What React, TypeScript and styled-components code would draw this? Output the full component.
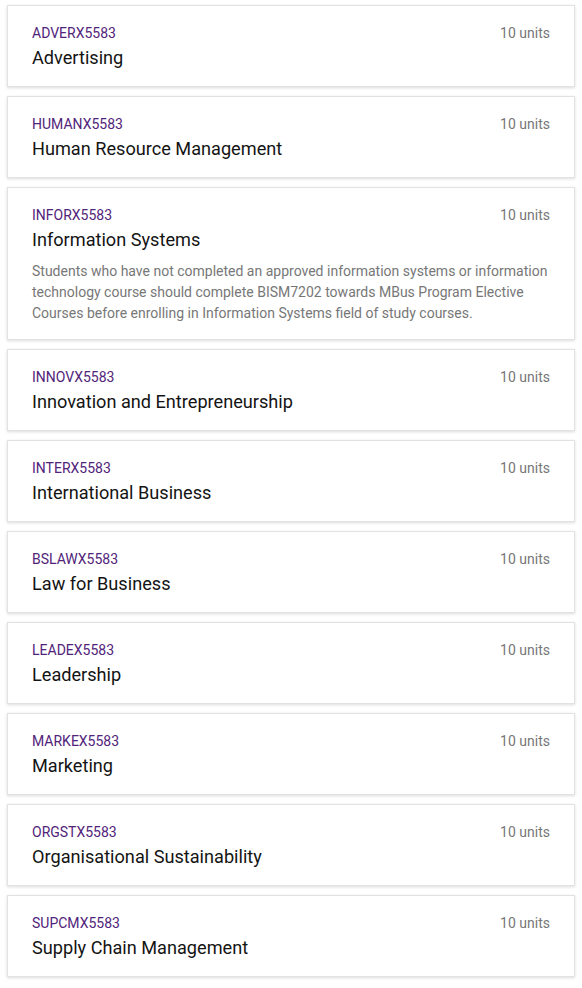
import styled, { createGlobalStyle } from "styled-components";

type Course = {
  code: string;
  title: string;
  units: number;
  note?: string;
};

const courses: Course[] = [
  { code: "ADVERX5583", title: "Advertising", units: 10 },
  { code: "HUMANX5583", title: "Human Resource Management", units: 10 },
  {
    code: "INFORX5583",
    title: "Information Systems",
    units: 10,
    note:
      "Students who have not completed an approved information systems or information technology course should complete BISM7202 towards MBus Program Elective Courses before enrolling in Information Systems field of study courses.",
  },
  { code: "INNOVX5583", title: "Innovation and Entrepreneurship", units: 10 },
  { code: "INTERX5583", title: "International Business", units: 10 },
  { code: "BSLAWX5583", title: "Law for Business", units: 10 },
  { code: "LEADEX5583", title: "Leadership", units: 10 },
  { code: "MARKEX5583", title: "Marketing", units: 10 },
  { code: "ORGSTX5583", title: "Organisational Sustainability", units: 10 },
  { code: "SUPCMX5583", title: "Supply Chain Management", units: 10 },
];

const App = () => {
  return (
    <>
      <GlobalStyle />
      <List>
        {courses.map((c) => (
          <Card key={c.code}>
            <TopRow>
              <Code>{c.code}</Code>
              <Units>{c.units} units</Units>
            </TopRow>
            <Title>{c.title}</Title>
            {c.note && <Note>{c.note}</Note>}
          </Card>
        ))}
      </List>
    </>
  );
};

export default App;

const GlobalStyle = createGlobalStyle`
  body {
    margin: 0;
    background: #fff;
    font-family: Roboto, "Liberation Sans", sans-serif;
  }
`;

const List = styled.div`
  display: flex;
  flex-direction: column;
  gap: 9px;
  padding: 5px 7px;
`;

const Card = styled.div`
  background: #fff;
  border: 1px solid #e2e2e2;
  box-shadow: 0 1px 3px rgba(0, 0, 0, 0.14);
  padding: 17px 24px 15px 24px;
`;

const TopRow = styled.div`
  display: flex;
  justify-content: space-between;
  align-items: center;
  height: 20px;
`;

const Code = styled.span`
  font-size: 14px;
  color: #51247a;
`;

const Units = styled.span`
  font-size: 14px;
  color: #777;
`;

const Title = styled.div`
  margin-top: 2px;
  font-size: 18.15px;
  line-height: 26px;
  color: #141414;
`;

const Note = styled.p`
  margin: 8px 0 0;
  font-size: 14px;
  line-height: 21px;
  color: #777;
`;
